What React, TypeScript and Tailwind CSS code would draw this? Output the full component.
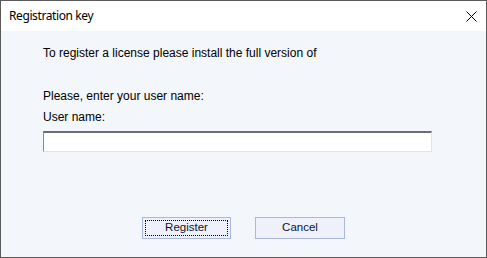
import React from "react";

export default function App() {
  return (
    <div className="w-[487px] h-[258px] border border-[#5a5a5a] flex flex-col bg-white overflow-hidden">
      <div className="h-[30px] bg-white flex items-center justify-between pl-[8px] pr-[9px] shrink-0">
        <span className="text-[12px] tracking-[-0.4px] text-black" style={{ fontFamily: '"Noto Sans", sans-serif' }}>
          Registration key
        </span>
        <svg width="11" height="11" viewBox="0 0 11 11" className="shrink-0">
          <path d="M0.5 0.5 L10.5 10.5 M10.5 0.5 L0.5 10.5" stroke="#000" strokeWidth="1" />
        </svg>
      </div>
      <div
        className="flex-1 bg-[#f3f6fb] flex flex-col pl-[42px] pt-[16px] pb-[18px] text-[12px] text-black"
        style={{ fontFamily: '"Liberation Sans", Arial, sans-serif' }}
      >
        <div className="h-[13px] leading-[13px]">To register a license please install the full version of</div>
        <div className="h-[13px] leading-[13px] mt-[30px]">Please, enter your user name:</div>
        <div className="h-[13px] leading-[13px] mt-[8px]">User name:</div>
        <div className="mt-[7px] w-[389px] h-[21px] bg-white border-t-2 border-l border-b border-r border-t-[#6d6d6d] border-l-[#8a8a8a] border-b-[#e3e3e3] border-r-[#e3e3e3]" />
        <div className="flex-1" />
        <div className="flex gap-[24px] pl-[99px] text-[11.5px]">
          <div className="w-[89px] h-[22px] border border-[#aab8df] bg-[#eef1f9] p-[2px] flex">
            <div className="flex-1 border border-dotted border-black flex items-center justify-center text-[#101030]">
              Register
            </div>
          </div>
          <div className="w-[90px] h-[22px] border border-[#aab8df] bg-[#eef1f9] flex items-center justify-center text-[#101030]">
            Cancel
          </div>
        </div>
      </div>
    </div>
  );
}
